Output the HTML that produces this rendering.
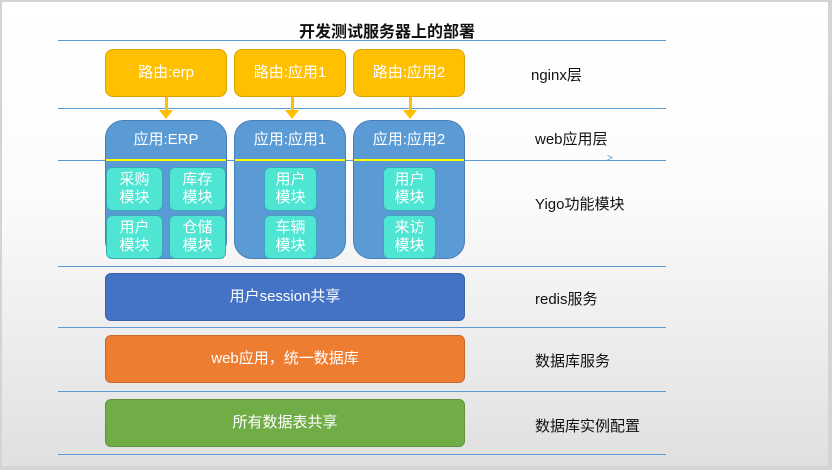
<!DOCTYPE html>
<html><head><meta charset="utf-8"><style>
*{margin:0;padding:0;box-sizing:border-box}
body{width:832px;height:470px;background:#d4d4d4;position:relative;overflow:hidden;font-family:"Liberation Sans","Noto Sans CJK SC",sans-serif}
#pg{position:absolute;left:2px;top:2px;width:826px;height:464px;background:linear-gradient(#fff 0%,#fcfcfc 40%,#e0e0e0 100%)}
.a{position:absolute}
.hl{position:absolute;left:58px;width:608px;height:1px;background:#5b9bd5}
.y{background:#ffc000;border:1px solid #d9a300;border-radius:8px;color:#fff;font-size:15px;text-align:center;line-height:46px}
.b{background:#5b9bd5;border:1px solid #4a7fb5;border-radius:18px}
.bh{position:absolute;left:0;right:0;top:0;height:40px;line-height:38px;color:#fff;font-size:15px;text-align:center;border-bottom:2px solid #ffff00}
.t{background:#4ee6d2;border:1px solid #3aa8b8;border-radius:6px;color:#fff;font-size:15px;line-height:18px;text-align:center;padding-top:3px}
.w{border-radius:6px;color:#fff;font-size:15px;text-align:center;line-height:46px}
.l{position:absolute;left:535px;font-size:15px;color:#111}
.arr{position:absolute;width:3px;background:#ffc000}
.arr:after{content:"";position:absolute;left:-6px;bottom:-6px;border-left:7px solid transparent;border-right:7px solid transparent;border-top:9px solid #ffc000}
</style></head><body><div id="pg"></div>
<div class="a" style="left:299px;width:200px;top:18px;font-size:16px;font-weight:bold;color:#111">开发测试服务器上的部署</div>
<div class="hl" style="top:40px"></div><div class="hl" style="top:108px"></div><div class="hl" style="top:160px"></div>
<div class="hl" style="top:266px"></div><div class="hl" style="top:327px"></div><div class="hl" style="top:391px"></div><div class="hl" style="top:454px"></div>
<div class="a" style="left:607px;top:153px;font-size:10px;color:#5b9bd5">&gt;</div>
<div class="a y" style="left:105px;top:49px;width:122px;height:48px">路由:erp</div>
<div class="a y" style="left:234px;top:49px;width:112px;height:48px">路由:应用1</div>
<div class="a y" style="left:353px;top:49px;width:112px;height:48px">路由:应用2</div>
<div class="arr" style="left:165px;top:97px;height:16px"></div>
<div class="arr" style="left:291px;top:97px;height:16px"></div>
<div class="arr" style="left:409px;top:97px;height:16px"></div>
<div class="a b" style="left:105px;top:120px;width:122px;height:139px"><div class="bh">应用:ERP</div></div>
<div class="a b" style="left:234px;top:120px;width:112px;height:139px"><div class="bh">应用:应用1</div></div>
<div class="a b" style="left:353px;top:120px;width:112px;height:139px"><div class="bh">应用:应用2</div></div>
<div class="a t" style="left:106px;top:167px;width:57px;height:44px">采购<br>模块</div>
<div class="a t" style="left:169px;top:167px;width:57px;height:44px">库存<br>模块</div>
<div class="a t" style="left:106px;top:215px;width:57px;height:44px">用户<br>模块</div>
<div class="a t" style="left:169px;top:215px;width:57px;height:44px">仓储<br>模块</div>
<div class="a t" style="left:264px;top:167px;width:53px;height:44px">用户<br>模块</div>
<div class="a t" style="left:264px;top:215px;width:53px;height:44px">车辆<br>模块</div>
<div class="a t" style="left:383px;top:167px;width:53px;height:44px">用户<br>模块</div>
<div class="a t" style="left:383px;top:215px;width:53px;height:44px">来访<br>模块</div>
<div class="a w" style="left:105px;top:273px;width:360px;height:48px;background:#4472c4;border:1px solid #3a62a8">用户session共享</div>
<div class="a w" style="left:105px;top:335px;width:360px;height:48px;background:#ed7d31;border:1px solid #c8682a">web应用，统一数据库</div>
<div class="a w" style="left:105px;top:399px;width:360px;height:48px;background:#70ad47;border:1px solid #5f933c">所有数据表共享</div>
<div class="l" style="top:64px;left:531px">nginx层</div>
<div class="l" style="top:128px">web应用层</div>
<div class="l" style="top:193px">Yigo功能模块</div>
<div class="l" style="top:288px">redis服务</div>
<div class="l" style="top:350px">数据库服务</div>
<div class="l" style="top:415px">数据库实例配置</div>
</body></html>
